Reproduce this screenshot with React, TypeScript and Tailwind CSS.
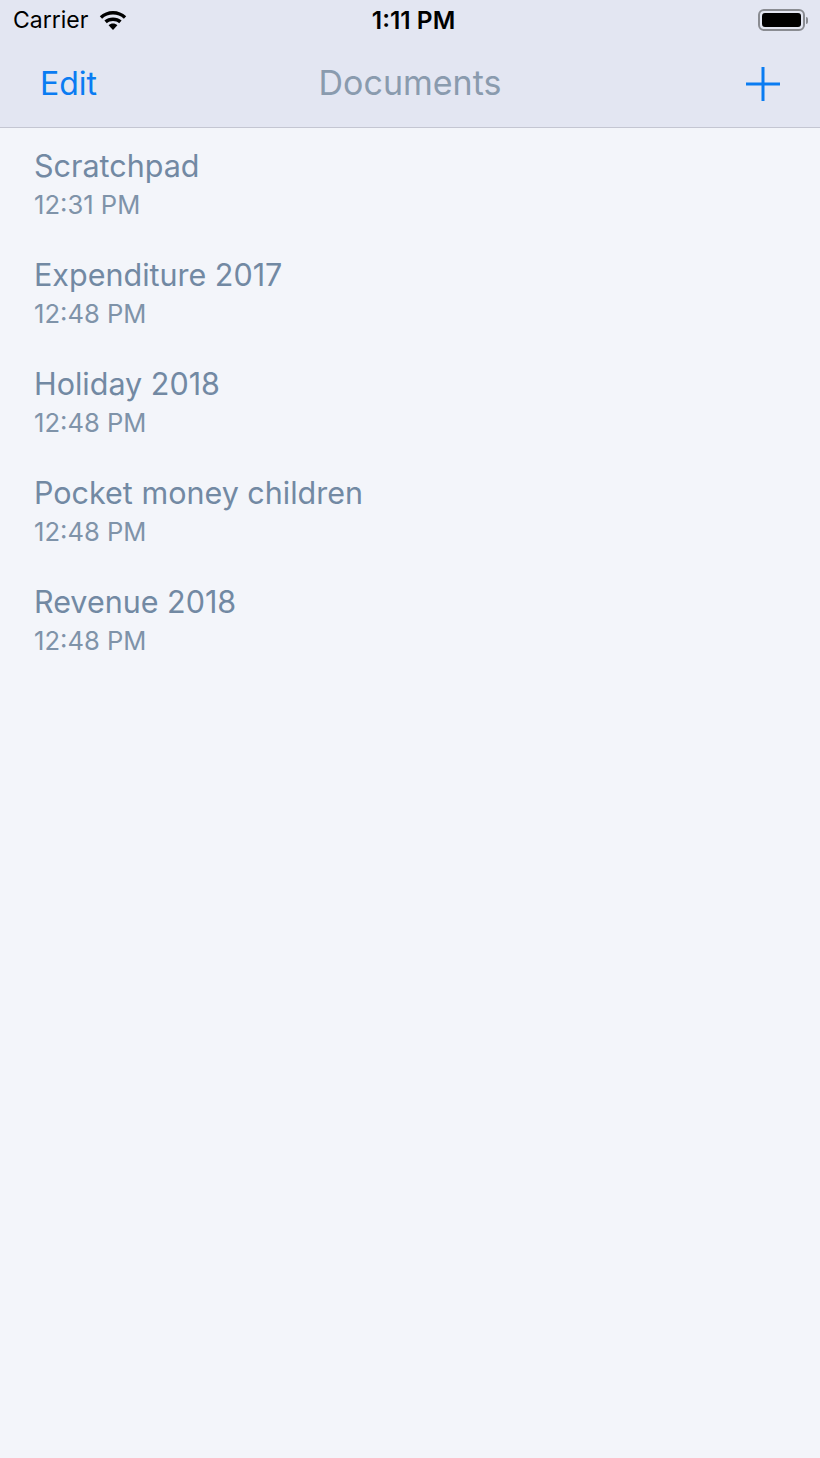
const docs = [
  { name: "Scratchpad", time: "12:31 PM" },
  { name: "Expenditure 2017", time: "12:48 PM" },
  { name: "Holiday 2018", time: "12:48 PM" },
  { name: "Pocket money children", time: "12:48 PM" },
  { name: "Revenue 2018", time: "12:48 PM" },
];

const WifiIcon = () => (
  <svg width="28" height="20" viewBox="0 0 28 20" fill="#000">
    <path d="M14 1C9 1 4.400 3 .8 6.200l2.300 2.500C6.100 6.100 9.900 4.600 14 4.600s7.900 1.500 10.900 4.100l2.300-2.500C23.600 3 19 1 14 1z" />
    <path d="M14 7.400c-3.300 0-6.300 1.200-8.600 3.200l2.400 2.600C9.500 11.800 11.600 11 14 11s4.500.8 6.200 2.200l2.400-2.600C20.300 8.600 17.300 7.400 14 7.400z" />
    <path d="M14 13.600c-1.700 0-3.200.6-4.400 1.600L14 20l4.400-4.800C17.200 14.200 15.700 13.600 14 13.600z" />
  </svg>
);

const Battery = () => (
  <div className="flex items-center gap-[1px]">
    <div className="w-[47px] h-[22px] rounded-[6px] border-2 border-[#8a8c92] p-[2px]">
      <div className="w-full h-full rounded-[3px] bg-black" />
    </div>
    <div className="w-[2px] h-[7px] rounded-r-full bg-[#8a8c92]" />
  </div>
);

const PlusIcon = () => (
  <svg width="34" height="34" viewBox="0 0 34 34" fill="#0a7cf2">
    <rect x="15.500" y="0" width="3" height="34" />
    <rect x="0" y="15.500" width="34" height="3" />
  </svg>
);

export default function App() {
  return (
    <div className="w-[820px] h-[1458px] bg-[#f3f5fa] flex flex-col font-['Inter',sans-serif]">
      <header className="h-[128px] shrink-0 bg-[#e3e6f2] border-b border-[#c4c6d2]">
        <div className="relative h-[40px] flex items-center justify-between pl-[13px] pr-[12px]">
          <div className="flex items-center gap-[11px]">
            <span className="text-[23px] text-black">Carrier</span>
            <WifiIcon />
          </div>
          <span className="absolute left-0 right-0 text-center text-[24.500px] font-semibold text-black pl-[7px]">1:11 PM</span>
          <Battery />
        </div>
        <div className="relative h-[87px] flex items-center justify-between pl-[40px] pr-[40px]">
          <span className="text-[32px] text-[#0a7cf2]">Edit</span>
          <span className="absolute left-0 right-0 text-center text-[34px] text-[#8a9bae] pb-[2px]">Documents</span>
          <PlusIcon />
        </div>
      </header>
      <ul className="flex flex-col pt-[16px] pl-[34px]">
        {docs.map((doc) => (
          <li key={doc.name} className="h-[109px] flex flex-col">
            <span className="text-[30.500px] leading-[44px] text-[#7289a3]">{doc.name}</span>
            <span className="text-[25.600px] leading-[33px] text-[#7f93a9]">{doc.time}</span>
          </li>
        ))}
      </ul>
    </div>
  );
}
